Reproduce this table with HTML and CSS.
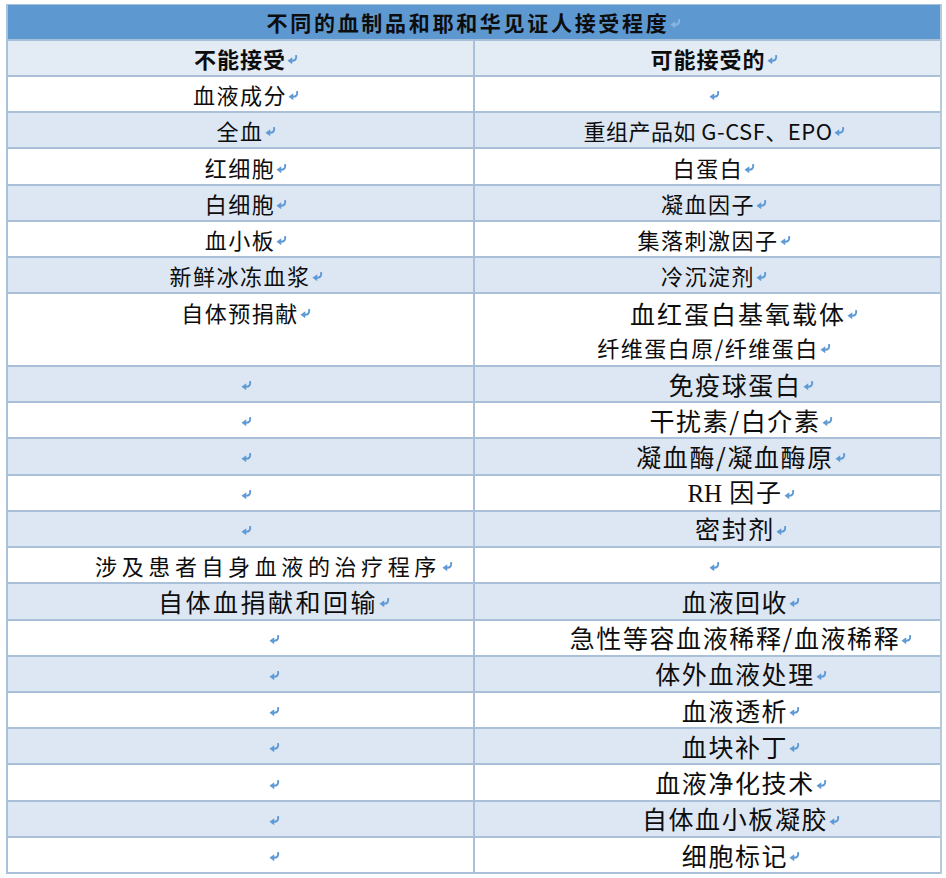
FILE: index.html
```html
<!DOCTYPE html>
<html lang="zh">
<head>
<meta charset="utf-8">
<title>不同的血制品和耶和华见证人接受程度</title>
<link rel="stylesheet" href="styles.css">
</head>
<body>
<svg width="0" height="0" class="defs">
  <symbol id="pm" viewBox="0 0 10 9">
    <path d="M8.3 0.8 C8.6 3.6 7.6 5.2 4.2 5.2" fill="none" stroke="currentColor" stroke-width="1.8" stroke-linecap="round"/>
    <path d="M0.4 5.2 L4.8 2 L4.8 8.4 Z" fill="currentColor"/>
  </symbol>
</svg>
<div class="page">
  <div class="tbl">
    <div class="title">不同的血制品和耶和华见证人接受程度<svg class="pm faint"><use href="#pm"/></svg></div>

    <div class="row alt head">
      <div class="cell l"><span>不能接受</span><svg class="pm"><use href="#pm"/></svg></div>
      <div class="cell r"><span>可能接受的</span><svg class="pm"><use href="#pm"/></svg></div>
    </div>

    <div class="row">
      <div class="cell l"><span>血液成分</span><svg class="pm"><use href="#pm"/></svg></div>
      <div class="cell r"><svg class="pm"><use href="#pm"/></svg></div>
    </div>
    <div class="row alt">
      <div class="cell l"><span>全血</span><svg class="pm"><use href="#pm"/></svg></div>
      <div class="cell r"><span class="latin">重组产品如 G-CSF、EPO</span><svg class="pm"><use href="#pm"/></svg></div>
    </div>
    <div class="row">
      <div class="cell l"><span>红细胞</span><svg class="pm"><use href="#pm"/></svg></div>
      <div class="cell r"><span>白蛋白</span><svg class="pm"><use href="#pm"/></svg></div>
    </div>
    <div class="row alt">
      <div class="cell l"><span>白细胞</span><svg class="pm"><use href="#pm"/></svg></div>
      <div class="cell r"><span>凝血因子</span><svg class="pm"><use href="#pm"/></svg></div>
    </div>
    <div class="row">
      <div class="cell l"><span>血小板</span><svg class="pm"><use href="#pm"/></svg></div>
      <div class="cell r"><span>集落刺激因子</span><svg class="pm"><use href="#pm"/></svg></div>
    </div>
    <div class="row alt">
      <div class="cell l"><span>新鲜冰冻血浆</span><svg class="pm"><use href="#pm"/></svg></div>
      <div class="cell r"><span>冷沉淀剂</span><svg class="pm"><use href="#pm"/></svg></div>
    </div>
    <div class="row double">
      <div class="cell l top"><div class="line"><span>自体预捐献</span><svg class="pm"><use href="#pm"/></svg></div></div>
      <div class="cell r top stack">
        <div class="line first"><span class="big2">血红蛋白基氧载体</span><svg class="pm"><use href="#pm"/></svg></div>
        <div class="line"><span>纤维蛋白原/纤维蛋白</span><svg class="pm"><use href="#pm"/></svg></div>
      </div>
    </div>
    <div class="row alt">
      <div class="cell l"><svg class="pm"><use href="#pm"/></svg></div>
      <div class="cell r sh"><span class="big">免疫球蛋白</span><svg class="pm"><use href="#pm"/></svg></div>
    </div>
    <div class="row">
      <div class="cell l"><svg class="pm"><use href="#pm"/></svg></div>
      <div class="cell r sh"><span class="big">干扰素/白介素</span><svg class="pm"><use href="#pm"/></svg></div>
    </div>
    <div class="row alt">
      <div class="cell l"><svg class="pm"><use href="#pm"/></svg></div>
      <div class="cell r sh"><span class="big">凝血酶/凝血酶原</span><svg class="pm"><use href="#pm"/></svg></div>
    </div>
    <div class="row">
      <div class="cell l"><svg class="pm"><use href="#pm"/></svg></div>
      <div class="cell r sh"><span class="big"><span class="serif">RH</span> 因子</span><svg class="pm"><use href="#pm"/></svg></div>
    </div>
    <div class="row alt">
      <div class="cell l"><svg class="pm"><use href="#pm"/></svg></div>
      <div class="cell r sh"><span class="big">密封剂</span><svg class="pm"><use href="#pm"/></svg></div>
    </div>
    <div class="row">
      <div class="cell l sh"><span class="spaced">涉及患者自身血液的治疗程序</span><svg class="pm"><use href="#pm"/></svg></div>
      <div class="cell r"><svg class="pm"><use href="#pm"/></svg></div>
    </div>
    <div class="row alt">
      <div class="cell l sh"><span class="wide">自体血捐献和回输</span><svg class="pm"><use href="#pm"/></svg></div>
      <div class="cell r sh"><span class="big">血液回收</span><svg class="pm"><use href="#pm"/></svg></div>
    </div>
    <div class="row">
      <div class="cell l sh"><svg class="pm"><use href="#pm"/></svg></div>
      <div class="cell r sh"><span class="big">急性等容血液稀释/血液稀释</span><svg class="pm"><use href="#pm"/></svg></div>
    </div>
    <div class="row alt">
      <div class="cell l sh"><svg class="pm"><use href="#pm"/></svg></div>
      <div class="cell r sh"><span class="big">体外血液处理</span><svg class="pm"><use href="#pm"/></svg></div>
    </div>
    <div class="row">
      <div class="cell l sh"><svg class="pm"><use href="#pm"/></svg></div>
      <div class="cell r sh"><span class="big">血液透析</span><svg class="pm"><use href="#pm"/></svg></div>
    </div>
    <div class="row alt">
      <div class="cell l sh"><svg class="pm"><use href="#pm"/></svg></div>
      <div class="cell r sh"><span class="big">血块补丁</span><svg class="pm"><use href="#pm"/></svg></div>
    </div>
    <div class="row">
      <div class="cell l sh"><svg class="pm"><use href="#pm"/></svg></div>
      <div class="cell r sh"><span class="big">血液净化技术</span><svg class="pm"><use href="#pm"/></svg></div>
    </div>
    <div class="row alt">
      <div class="cell l sh"><svg class="pm"><use href="#pm"/></svg></div>
      <div class="cell r sh"><span class="big">自体血小板凝胶</span><svg class="pm"><use href="#pm"/></svg></div>
    </div>
    <div class="row">
      <div class="cell l sh"><svg class="pm"><use href="#pm"/></svg></div>
      <div class="cell r sh"><span class="big">细胞标记</span><svg class="pm"><use href="#pm"/></svg></div>
    </div>
  </div>
</div>
</body>
</html>
```
FILE: styles.css
```css
* { box-sizing: border-box; }

body {
  margin: 0;
  background: #ffffff;
  font-family: "Noto Sans CJK SC", "Noto Sans", sans-serif;
  color: #0d0d0d;
}

.defs { position: absolute; width: 0; height: 0; overflow: hidden; }

.page {
  padding: 4px 0 0 6px;
}

.tbl {
  width: 936px;
  border-left: 2px solid #a9c1da;
  border-right: 2px solid #b7c9dc;
  border-top: 1px solid #a9c1da;
}

.title {
  height: 36px;
  background: #5e98d1;
  display: flex;
  align-items: center;
  justify-content: center;
  font-weight: bold;
  font-size: 21px;
  letter-spacing: 2.7px;
  line-height: 1;
  border-bottom: 2px solid #a7bfd9;
}

.row {
  display: grid;
  grid-template-columns: 467px 1fr;
  height: 36.24px;
  border-bottom: 2px solid #a9c0d8;
  background: #ffffff;
}

.row.alt { background: #dde7f3; }
.row.head { background: #e3ebf5; height: 36px; }
.row.double { height: 72.5px; }

.cell {
  display: flex;
  align-items: center;
  justify-content: center;
  font-size: 22px;
  font-weight: 400;
  letter-spacing: 1.5px;
  line-height: 1;
  white-space: nowrap;
}

.cell.l {
  border-right: 2px solid #a9c0d8;
  padding-left: 11px;
}

.cell.r { padding-left: 13px; }

.cell.sh { padding-left: 67px; }

.head .cell {
  font-weight: bold;
  letter-spacing: 1px;
}

.cell.top {
  align-items: flex-start;
  padding-top: 1px;
}

.cell.stack {
  flex-direction: column;
  align-items: center;
}

.line {
  display: flex;
  align-items: center;
  height: 34px;
}

.line.first { margin-left: 60px; }

.big { font-size: 25px; letter-spacing: 1.6px; }
.big2 { font-size: 25px; letter-spacing: 2px; }
.spaced { font-size: 22px; letter-spacing: 4.6px; }
.wide { font-size: 25px; letter-spacing: 2.5px; }
.latin { letter-spacing: 0.5px; }
.serif { font-family: "Liberation Serif", serif; letter-spacing: 0; }

.pm {
  width: 11px;
  height: 10px;
  margin-top: 4px;
  margin-left: 1px;
  color: #5f9ad5;
  flex: none;
}

.pm.faint { color: #86b6e4; }
```
